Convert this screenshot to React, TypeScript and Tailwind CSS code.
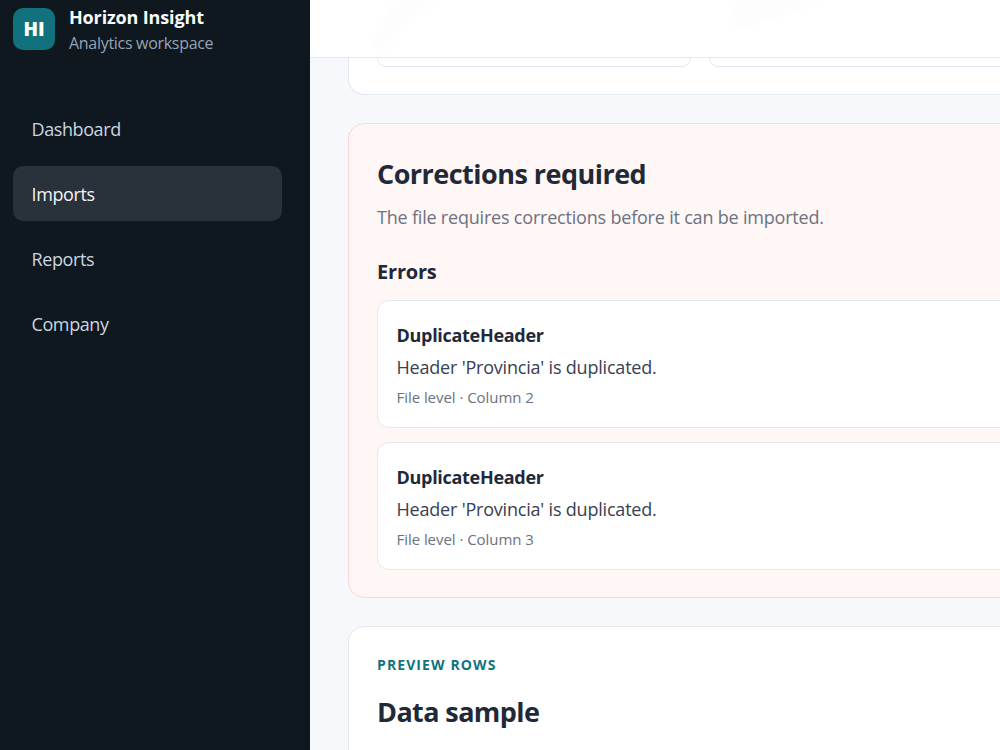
const navItems = ["Dashboard", "Imports", "Reports", "Company"];

const errors = [
  { code: "DuplicateHeader", message: "Header 'Provincia' is duplicated.", where: "File level · Column 2" },
  { code: "DuplicateHeader", message: "Header 'Provincia' is duplicated.", where: "File level · Column 3" },
];

function Sidebar() {
  return (
    <aside className="w-[310px] h-full shrink-0 bg-[#0f181f] px-[13px] pt-2">
      <div className="flex gap-[14px] h-[42px]">
        <div className="w-[42px] h-[42px] rounded-[10px] bg-[#11727d] flex items-center justify-center text-white font-extrabold text-[19px]">HI</div>
        <div className="-mt-[8px]">
          <div className="text-[#f8fafc] font-bold text-[18px] leading-[34px] tracking-[-0.15px]">Horizon Insight</div>
          <div className="text-[#94a3b8] text-[16px] leading-[18px] tracking-[-0.3px]">Analytics workspace</div>
        </div>
      </div>
      <nav className="mt-[51px] flex flex-col gap-[10px]">
        {navItems.map((item) => (
          <div
            key={item}
            className={
              "h-[55px] w-[269px] rounded-[10px] px-[18.5px] pt-[2px] flex items-center text-[18px] tracking-[-0.4px] " +
              (item === "Imports" ? "bg-[#29313a] text-[#f1f5f9]" : "text-[#cbd5e1]")
            }
          >
            {item}
          </div>
        ))}
      </nav>
    </aside>
  );
}

function ErrorCard({ code, message, where }: { code: string; message: string; where: string }) {
  return (
    <div className="bg-white border border-[#e5e7eb] rounded-[12px] h-[128px] px-[18.5px] pt-[19px]">
      <div className="text-[#1f2937] font-bold text-[18px] leading-[30px] tracking-[-0.3px]">{code}</div>
      <div className="text-[#374151] text-[18px] leading-[34px] tracking-[-0.2px]">{message}</div>
      <div className="text-[#6b7280] text-[15px] leading-[26px] tracking-[-0.05px]">{where}</div>
    </div>
  );
}

export default function App() {
  return (
    <div className="w-[1000px] h-[750px] overflow-hidden flex bg-[#f6f8fc] font-['Open_Sans','Noto_Sans',sans-serif]">
      <Sidebar />
      <main className="flex-1 min-w-0 overflow-hidden">
        <header className="relative h-[58px] bg-white border-b border-[#e2e8f0]">
          <svg className="absolute left-0 top-0 blur-[3px]" width="690" height="57" viewBox="0 0 690 57">
            <polygon points="85,0 135,0 100,20 70,55 62,45" fill="#fdfdfd" />
            <polygon points="422,0 515,0 480,14 425,30" fill="#fdfdfd" />
          </svg>
        </header>
        <div className="pl-[38px] w-[960px] flex flex-col gap-[28px]">
          <section className="h-[37px] bg-white border-x border-b border-[#e2e8f0] rounded-b-[16px] px-[28px] flex gap-[18px]">
            <div className="w-[314px] h-[9px] bg-white border-x border-b border-[#e2e8f0] rounded-b-[10px]" />
            <div className="w-[314px] h-[9px] bg-white border-x border-b border-[#e2e8f0] rounded-b-[10px]" />
          </section>
          <section className="h-[475px] bg-[#fff6f6] border border-[#fcd5d5] rounded-[16px] px-[28px] pt-[28px]">
            <h2 className="text-[#1f2937] font-bold text-[27px] leading-[44px] tracking-[-0.53px]">Corrections required</h2>
            <p className="mt-[5px] text-[#6b7280] text-[18px] leading-[32px] tracking-[-0.2px]">The file requires corrections before it can be imported.</p>
            <h3 className="mt-[23px] text-[#1f2937] font-bold text-[20px] leading-[32px] tracking-[-0.2px]">Errors</h3>
            <div className="mt-[12px] flex flex-col gap-[14px]">
              {errors.map((e) => (
                <ErrorCard key={e.where} code={e.code} message={e.message} where={e.where} />
              ))}
            </div>
          </section>
          <section className="h-[200px] bg-white border border-[#e5e7eb] rounded-[16px] px-[28px] pt-[28px]">
            <div className="text-[#11727d] font-bold text-[14px] leading-[20px] tracking-[1.1px]">PREVIEW ROWS</div>
            <h2 className="mt-[15px] text-[#1f2937] font-bold text-[27px] leading-[44px] tracking-[-0.6px]">Data sample</h2>
          </section>
        </div>
      </main>
    </div>
  );
}
